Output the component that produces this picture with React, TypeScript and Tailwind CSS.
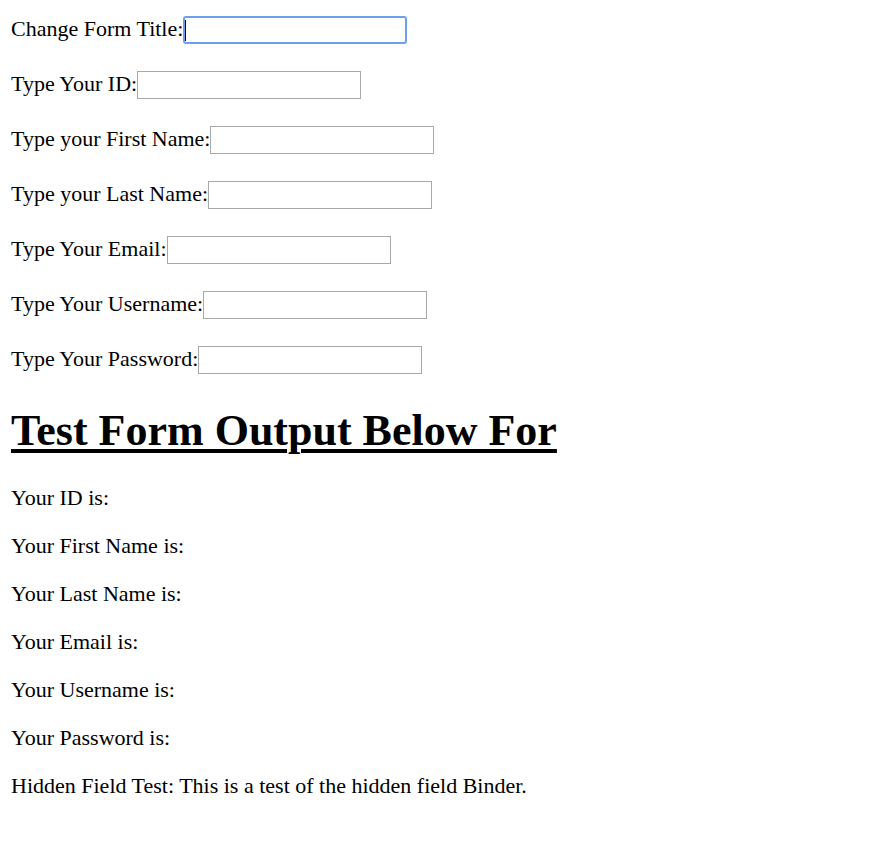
import React from "react";

const fields = [
  "Type Your ID:",
  "Type your First Name:",
  "Type your Last Name:",
  "Type Your Email:",
  "Type Your Username:",
  "Type Your Password:",
];

const outputs = [
  "Your ID is:",
  "Your First Name is:",
  "Your Last Name is:",
  "Your Email is:",
  "Your Username is:",
  "Your Password is:",
  "Hidden Field Test: This is a test of the hidden field Binder.",
];

export default function App() {
  return (
    <div className="min-h-[855px] bg-white px-[11px] pt-[16px] font-['Liberation_Serif','Times_New_Roman',serif] text-[22px] leading-[24px] text-black">
      {/* FORM */}
      <div className="flex flex-col gap-[27px]">
        <div className="flex h-[28px] items-center">
          <span className="pb-[2px]">Change Form Title:</span>
          <div className="relative">
            <input
              type="text"
              className="h-[28px] w-[224px] rounded-[3px] border-2 border-[#6c9ff0] bg-white outline-none"
            />
            {/* caret */}
            <div className="absolute left-[2px] top-[4px] h-[21px] w-[1px] bg-black" />
          </div>
        </div>
        {fields.map((label) => (
          <div key={label} className="flex h-[28px] items-center">
            <span className="pb-[2px]">{label}</span>
            <input
              type="text"
              className="h-[28px] w-[224px] border border-[#a9a9a9] bg-white outline-none"
            />
          </div>
        ))}
      </div>

      {/* OUTPUT */}
      <h1 className="mt-[32px] text-[44px] font-bold leading-[49px] underline decoration-[4px] underline-offset-[4px]">
        Test Form Output Below For
      </h1>
      <div className="mt-[31px] flex flex-col gap-[24px]">
        {outputs.map((line) => (
          <p key={line}>{line}</p>
        ))}
      </div>
    </div>
  );
}
